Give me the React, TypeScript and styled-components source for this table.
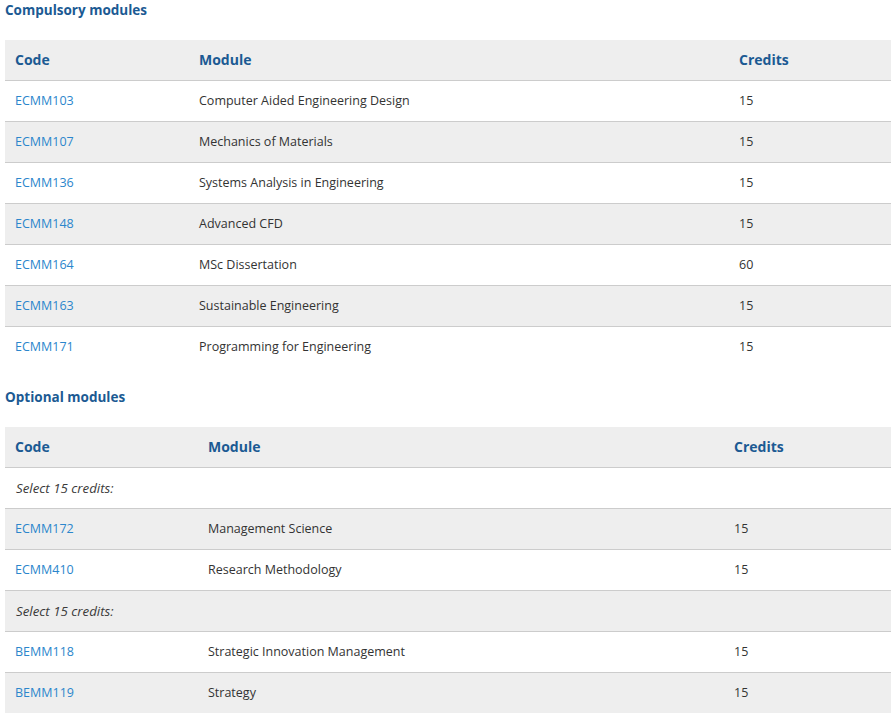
import React from "react";
import styled, { createGlobalStyle } from "styled-components";

const Global = createGlobalStyle`
  html, body { margin: 0; padding: 0; background: #fff; }
  body { font-family: "Open Sans", "Liberation Sans", sans-serif; color: #333; }
`;

const Page = styled.div`
  padding: 0 4px 0 5px;
`;

const Heading = styled.h3<{ $top: number }>`
  margin: ${(p) => p.$top}px 0 0 0;
  font-size: 13.5px;
  line-height: 20px;
  font-weight: 700;
  color: #1b5a93;
`;

const Table = styled.table`
  width: 886px;
  border-collapse: collapse;
  table-layout: fixed;
  margin-top: 20px;
  font-size: 12.5px;
`;

const HeadCell = styled.th<{ $w: number }>`
  width: ${(p) => p.$w}px;
  text-align: left;
  font-weight: 700;
  font-size: 14px;
  color: #1b5a93;
  background: #eeeeee;
  height: 40px;
  padding: 0 10px;
  box-sizing: border-box;
  border-bottom: 1px solid #cccccc;
`;

const Row = styled.tr<{ $alt: boolean }>`
  background: ${(p) => (p.$alt ? "#eeeeee" : "#ffffff")};
  & > td { border-bottom: 1px solid #cccccc; }
  &:last-child > td { border-bottom: none; }
`;

const Cell = styled.td`
  height: 41px;
  padding: 0 10px;
  box-sizing: border-box;
  color: #333;
`;

const CodeLink = styled.a`
  color: #2b86cc;
  text-decoration: none;
`;

const Note = styled.td`
  height: 41px;
  padding: 0 10px 0 11px;
  box-sizing: border-box;
  font-style: italic;
  font-size: 13.3px;
  color: #3a3a3a;
`;

type Item = { code: string; name: string; credits: string } | { note: string };

const compulsory: Item[] = [
  { code: "ECMM103", name: "Computer Aided Engineering Design", credits: "15" },
  { code: "ECMM107", name: "Mechanics of Materials", credits: "15" },
  { code: "ECMM136", name: "Systems Analysis in Engineering", credits: "15" },
  { code: "ECMM148", name: "Advanced CFD", credits: "15" },
  { code: "ECMM164", name: "MSc Dissertation", credits: "60" },
  { code: "ECMM163", name: "Sustainable Engineering", credits: "15" },
  { code: "ECMM171", name: "Programming for Engineering", credits: "15" },
];

const optional: Item[] = [
  { note: "Select 15 credits:" },
  { code: "ECMM172", name: "Management Science", credits: "15" },
  { code: "ECMM410", name: "Research Methodology", credits: "15" },
  { note: "Select 15 credits:" },
  { code: "BEMM118", name: "Strategic Innovation Management", credits: "15" },
  { code: "BEMM119", name: "Strategy", credits: "15" },
];

function ModuleTable({ items, widths }: { items: Item[]; widths: [number, number, number] }) {
  return (
    <Table>
      <thead>
        <tr>
          <HeadCell $w={widths[0]}>Code</HeadCell>
          <HeadCell $w={widths[1]}>Module</HeadCell>
          <HeadCell $w={widths[2]}>Credits</HeadCell>
        </tr>
      </thead>
      <tbody>
        {items.map((it, i) => (
          <Row key={i} $alt={i % 2 === 1}>
            {"note" in it ? (
              <Note colSpan={3}>{it.note}</Note>
            ) : (
              <>
                <Cell>
                  <CodeLink href="#">{it.code}</CodeLink>
                </Cell>
                <Cell>{it.name}</Cell>
                <Cell>{it.credits}</Cell>
              </>
            )}
          </Row>
        ))}
      </tbody>
    </Table>
  );
}

export default function App() {
  return (
    <Page>
      <Global />
      <Heading $top={0}>Compulsory modules</Heading>
      <ModuleTable items={compulsory} widths={[184, 540, 162]} />
      <Heading $top={20}>Optional modules</Heading>
      <ModuleTable items={optional} widths={[193, 526, 167]} />
    </Page>
  );
}
